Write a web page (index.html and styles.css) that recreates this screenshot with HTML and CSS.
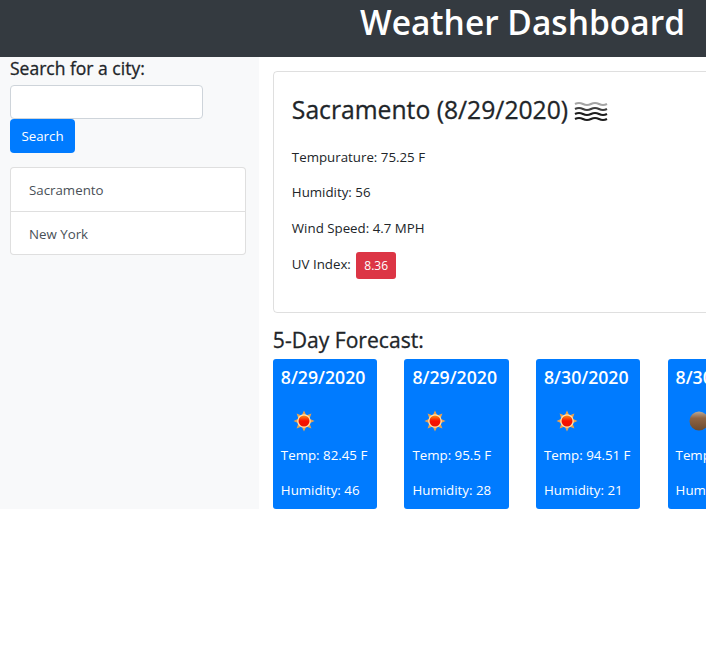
FILE: index.html
```html
<!DOCTYPE html>
<html lang="en">
<head>
    <meta charset="utf-8">
    <title>Weather Dashboard</title>
    <link rel="stylesheet" href="styles.css">
</head>
<body>
    <header class="top-bar">
        <h1>Weather Dashboard</h1>
    </header>
    <div class="page-row">
        <aside class="sidebar">
            <h5 class="search-label">Search for a city:</h5>
            <input class="search-input" type="text">
            <button class="search-btn">Search</button>
            <ul class="city-list">
                <li>Sacramento</li>
                <li>New York</li>
            </ul>
        </aside>
        <main class="content">
            <section class="today-card">
                <h3 class="today-title">Sacramento (8/29/2020)
                    <svg class="mist-icon" viewBox="0 0 34 24" width="34" height="24" fill="none" stroke="#1c1c1c" stroke-width="2.200">
                        <path d="M1 5q4-2 8 0t8 0 8 0 8 0" opacity=".4"/>
                        <path d="M1 10q4-2 8 0t8 0 8 0 8 0" opacity=".85"/>
                        <path d="M1 15q4-2 8 0t8 0 8 0 8 0"/>
                        <path d="M1 20q4-2 8 0t8 0 8 0 8 0"/>
                    </svg>
                </h3>
                <p>Tempurature: 75.25 F</p>
                <p>Humidity: 56</p>
                <p>Wind Speed: 4.7 MPH</p>
                <p class="uv-line">UV Index: <span class="uv-badge">8.36</span></p>
            </section>
            <h4 class="forecast-title">5-Day Forecast:</h4>
            <div class="forecast-row">
                <div class="forecast-card">
                    <h5>8/29/2020</h5>
                    <svg class="wx-icon" viewBox="0 0 50 50" width="50" height="50"><use href="#sun"/></svg>
                    <p>Temp: 82.45 F</p>
                    <p>Humidity: 46</p>
                </div>
                <div class="forecast-card">
                    <h5>8/29/2020</h5>
                    <svg class="wx-icon" viewBox="0 0 50 50" width="50" height="50"><use href="#sun"/></svg>
                    <p>Temp: 95.5 F</p>
                    <p>Humidity: 28</p>
                </div>
                <div class="forecast-card">
                    <h5>8/30/2020</h5>
                    <svg class="wx-icon" viewBox="0 0 50 50" width="50" height="50"><use href="#sun"/></svg>
                    <p>Temp: 94.51 F</p>
                    <p>Humidity: 21</p>
                </div>
                <div class="forecast-card">
                    <h5>8/30/2020</h5>
                    <svg class="wx-icon" viewBox="0 0 50 50" width="50" height="50">
                        <circle cx="25" cy="25" r="9.500" fill="url(#moon)"/>
                    </svg>
                    <p>Temp: 70.1 F</p>
                    <p>Humidity: 50</p>
                </div>
            </div>
        </main>
    </div>

    <!-- icon defs -->
    <svg class="defs" width="0" height="0">
        <defs>
            <linearGradient id="sunFill" x1="0" y1="0" x2="0" y2="1">
                <stop offset="0" stop-color="#ff8c10"/>
                <stop offset=".5" stop-color="#f81000"/>
                <stop offset="1" stop-color="#ee1500"/>
            </linearGradient>
            <linearGradient id="moon" x1="0" y1="0" x2="0" y2="1">
                <stop offset="0" stop-color="#b8a898"/>
                <stop offset=".35" stop-color="#8f6443"/>
                <stop offset="1" stop-color="#6b4a30"/>
            </linearGradient>
            <g id="sun">
                <polygon fill="#eda14a" points="25,14.500 27.300,19.460 32.400,17.600 30.540,22.700 35.500,25 30.540,27.300 32.400,32.400 27.300,30.540 25,35.500 22.700,30.540 17.600,32.400 19.460,27.300 14.500,25 19.460,22.700 17.600,17.600 22.700,19.460"/>
                <circle cx="25" cy="25" r="6.800" fill="#ffe3b0"/>
                <circle cx="25" cy="25" r="5.500" fill="url(#sunFill)"/>
            </g>
        </defs>
    </svg>
</body>
</html>
```

FILE: styles.css
```css
* {
    box-sizing: border-box;
}

html, body {
    overflow-x: hidden;
}

body {
    margin: 0;
    font-family: "Open Sans", "Noto Sans", sans-serif;
    font-size: 13.300px;
    line-height: 1.5;
    color: #212529;
    background-color: #fff;
}

.defs {
    position: absolute;
}

/* header */
.top-bar {
    height: 57px;
    background-color: #343a40;
    color: #fff;
    text-align: right;
    padding-right: 21px;
}

.top-bar h1 {
    margin: 0;
    font-size: 33.500px;
    font-weight: 600;
    line-height: 45px;
}

.page-row {
    display: flex;
    width: 1000px;
    align-items: stretch;
}

/* sidebar */
.sidebar {
    width: 259px;
    flex: none;
    padding: 1px 13px 0 10px;
    background-color: #f8f9fa;
}

.search-label {
    margin: 0 0 6px;
    font-size: 17.500px;
    font-weight: 500;
    line-height: 21px;
    -webkit-text-stroke: 0.3px #212529;
}

.search-input {
    display: block;
    width: 193px;
    height: 34px;
    background-color: #fff;
    border: 1px solid #ced4da;
    border-radius: 4px;
}

.search-btn {
    display: block;
    width: 65px;
    height: 34px;
    padding: 1px 0 0;
    font: inherit;
    color: #fff;
    background-color: #007bff;
    border: 0;
    border-radius: 4px;
}

.city-list {
    margin: 14px 0 0;
    padding: 0;
    list-style: none;
    background-color: #fff;
    border: 1px solid rgba(0, 0, 0, 0.125);
    border-radius: 4px;
}

.city-list li {
    height: 43px;
    padding: 13px 18px 0;
    color: #495057;
}

.city-list li + li {
    border-top: 1px solid rgba(0, 0, 0, 0.125);
}

/* main column */
.content {
    flex: 1;
    padding: 14px 0 0 13.850px;
}

.today-card {
    height: 242px;
    padding: 23px 18px 0;
    border: 1px solid rgba(0, 0, 0, 0.125);
    border-radius: 4px;
}

.today-title {
    display: flex;
    align-items: center;
    gap: 6px;
    margin: 0 0 23.800px;
    font-size: 24.700px;
    font-weight: 500;
    line-height: 29px;
    -webkit-text-stroke: 0.3px #212529;
}

.mist-icon {
    margin-top: 2px;
}

.today-card p {
    margin: 0 0 16px;
    line-height: 19.500px;
}

.today-card .uv-line {
    margin-top: -2px;
}

.uv-badge {
    display: inline-block;
    height: 27px;
    margin-left: 2px;
    padding: 4px 8px;
    font-size: 12px;
    color: #fff;
    background-color: #dc3545;
    border-radius: 3px;
    vertical-align: middle;
}

.forecast-title {
    margin: 13px 0 5px;
    font-size: 21.100px;
    font-weight: 500;
    line-height: 28px;
    -webkit-text-stroke: 0.3px #212529;
}

.forecast-row {
    display: flex;
    gap: 27.150px;
}

.forecast-card {
    flex: none;
    width: 104.450px;
    height: 150px;
    padding: 8px 8px 0;
    color: #fff;
    background-color: #007bff;
    border-radius: 3px;
}

.forecast-card h5 {
    margin: 0;
    font-size: 17.700px;
    font-weight: 600;
    line-height: 21px;
}

.wx-icon {
    display: block;
    margin: 8px 0 0 -2px;
}

.forecast-card p {
    margin: 0 0 15.500px;
    white-space: nowrap;
    line-height: 19.500px;
}
```
